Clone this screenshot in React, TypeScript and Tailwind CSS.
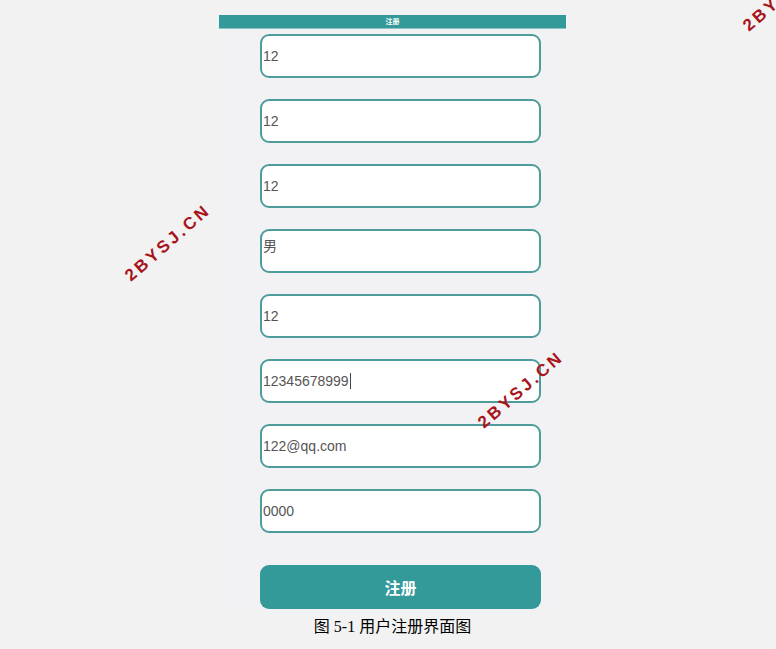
import React from "react";

const fields = [
  { value: "12" },
  { value: "12" },
  { value: "12" },
  { value: "男", top: true },
  { value: "12" },
  { value: "12345678999", caret: true },
  { value: "122@qq.com" },
  { value: "0000" },
];

function Watermark({ x, y }: { x: number; y: number }) {
  return (
    <div
      className="pointer-events-none absolute whitespace-nowrap text-[17px] font-bold tracking-[3px] text-[#a8141b]"
      style={{
        left: x,
        top: y,
        transform: "translate(-50%, -50%) rotate(-41deg)",
        fontFamily: '"Liberation Sans", Arial, sans-serif',
      }}
    >
      2BYSJ.CN
    </div>
  );
}

export default function App() {
  return (
    <div className="relative h-[649px] w-full overflow-hidden bg-[#f2f2f2]">
      <div className="ml-[219px] pt-[15px]">
        <div className="flex w-[347px] flex-col bg-[#f2f1f3] pb-[2px]">
          <div className="flex h-[14px] items-center justify-center border-b border-[#8cc4c4] bg-[#339999]">
            <span
              className="text-[7px] font-bold leading-none text-white"
              style={{ fontFamily: '"Noto Sans CJK SC", sans-serif' }}
            >
              注册
            </span>
          </div>
          <div
            className="flex flex-col gap-[21px] pl-[41px] pt-[5px]"
            style={{ fontFamily: '"Liberation Sans", "Noto Sans CJK SC", sans-serif' }}
          >
            {fields.map((f, i) => (
              <div
                key={i}
                className={`flex h-[44px] w-[281px] rounded-[9px] border-2 border-[#4f9c9c] bg-white pl-px text-[14px] text-[#555] ${
                  f.top ? "items-start pt-[5px]" : "items-center"
                }`}
              >
                {f.value}
                {f.caret && <span className="ml-px inline-block h-[16px] w-px bg-[#444]" />}
              </div>
            ))}
          </div>
          <div className="ml-[41px] mt-[32px] flex h-[44px] w-[281px] items-center justify-center rounded-[9px] bg-[#339999]">
            <span
              className="text-[16px] font-bold text-white"
              style={{ fontFamily: '"Noto Sans CJK SC", sans-serif' }}
            >
              注册
            </span>
          </div>
        </div>
        <div
          className="w-[347px] pt-[4px] text-center text-[16px] text-black"
          style={{ fontFamily: '"Liberation Serif", "Noto Sans CJK SC", serif' }}
        >
          图 5-1 用户注册界面图
        </div>
      </div>
      <Watermark x={168} y={243} />
      <Watermark x={521} y={390} />
      <Watermark x={786} y={-7} />
    </div>
  );
}
